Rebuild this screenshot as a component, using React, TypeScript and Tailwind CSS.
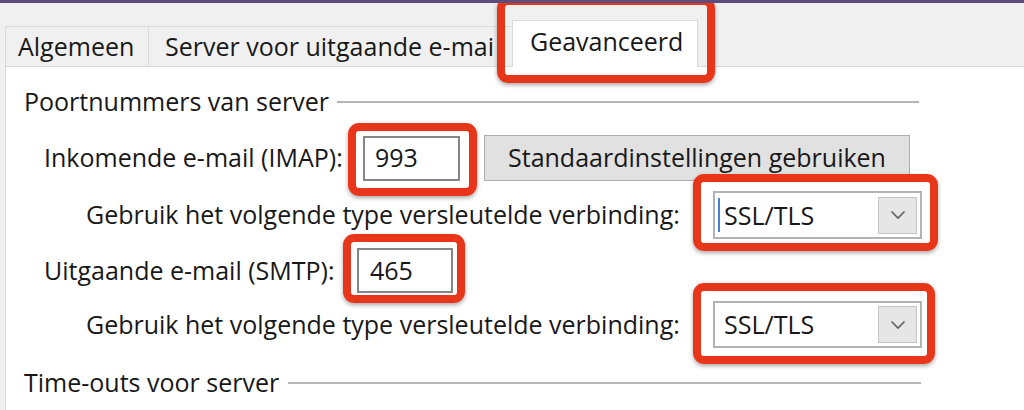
import React from "react";

const font = { fontFamily: '"Open Sans", "Noto Sans", Arial, sans-serif' };

function RedBox({ cls }: { cls: string }) {
  return (
    <div
      className={`pointer-events-none absolute rounded-[11px] border-[8px] border-[#e8361b] shadow-[0_2px_4px_rgba(0,0,0,0.35)] ${cls}`}
    />
  );
}

function Chevron() {
  return (
    <svg width="16" height="10" viewBox="0 0 16 10" fill="none">
      <path d="M1.5 1.5 L8 8 L14.5 1.5" stroke="#5f5f5f" strokeWidth="1.6" />
    </svg>
  );
}

function Select({ focused }: { focused?: boolean }) {
  return (
    <div className="flex h-full w-full items-center border-2 border-[#b3b3b3] bg-white pl-[3px] pr-[3px]">
      {focused ? <div className="h-[34px] w-[2px] bg-[#4a7fd8]" /> : <div className="w-[2px]" />}
      <span className="ml-[4px] flex-1 text-[25px] leading-none text-[#181818]">SSL/TLS</span>
      <div className="flex h-[37px] w-[39px] items-center justify-center border border-[#c4c4c4] bg-[#e6e6e6]">
        <Chevron />
      </div>
    </div>
  );
}

export default function App() {
  return (
    <div
      className="h-[410px] w-[1024px] overflow-hidden border-t-[3px] border-[#5c4e7c] bg-[#f0f0f0] text-[#181818]"
      style={font}
    >
      {/* tab strip */}
      <div className="flex h-[63px] items-end pl-[5px]">
        <div className="flex h-[40px] w-[143px] items-center border-l border-t border-[#d9d9d9] pl-[12px] text-[25px]">
          Algemeen
        </div>
        <div className="flex h-[40px] w-[364px] items-center overflow-hidden whitespace-nowrap border-l border-t border-[#d9d9d9] pl-[16px] text-[25px]">
          Server voor uitgaande e-mai
        </div>
        <div className="relative z-10 -mb-px flex h-[47px] w-[186px] items-center border-x border-t border-[#d9d9d9] bg-white pb-[5px] pl-[17px] text-[25px]">
          Geavanceerd
          <RedBox cls="-left-[16px] -right-[18px] -top-[24px] -bottom-[16px]" />
        </div>
      </div>

      {/* content panel */}
      <div className="ml-[5px] h-[400px] border-l border-t border-[#d9d9d9] bg-white pl-[18px]">
        {/* section header */}
        <div className="mt-[19px] flex h-[32px] w-[895px] items-center text-[25px]">
          <span>Poortnummers van server</span>
          <div className="ml-[8px] h-[2px] flex-1 bg-[#b5b5b5]" />
        </div>

        {/* IMAP row */}
        <div className="mt-[16px] flex h-[48px] items-center pl-[20px] text-[25px]">
          <span className="w-[319px] whitespace-nowrap">Inkomende e-mail (IMAP):</span>
          <div className="relative h-[45px] w-[97px]">
            <div className="flex h-full w-full items-center border-2 border-[#858585] bg-white pl-[10px]">993</div>
            <RedBox cls="-left-[15px] -right-[17px] -top-[13px] -bottom-[15px]" />
          </div>
          <button className="ml-[24px] h-[46px] w-[426px] whitespace-nowrap border border-[#adadad] bg-[#e1e1e1] text-[25px] text-[#181818]">
            Standaardinstellingen gebruiken
          </button>
        </div>

        {/* encryption row 1 */}
        <div className="mt-[9px] flex h-[48px] items-center pl-[62px] text-[25px]">
          <span className="w-[627px] whitespace-nowrap">Gebruik het volgende type versleutelde verbinding:</span>
          <div className="relative h-[48px] w-[209px]">
            <Select focused />
            <RedBox cls="-left-[20px] -right-[16px] -top-[17px] -bottom-[12px]" />
          </div>
        </div>

        {/* SMTP row */}
        <div className="mt-[9px] flex h-[45px] items-center pl-[20px] text-[25px]">
          <span className="w-[313px] whitespace-nowrap">Uitgaande e-mail (SMTP):</span>
          <div className="relative h-[45px] w-[96px]">
            <div className="flex h-full w-full items-center border-2 border-[#858585] bg-white pl-[11px]">465</div>
            <RedBox cls="-left-[14px] -right-[12px] -top-[14px] -bottom-[10px]" />
          </div>
        </div>

        {/* encryption row 2 */}
        <div className="mt-[8px] flex h-[47px] items-center pl-[62px] text-[25px]">
          <span className="w-[627px] whitespace-nowrap">Gebruik het volgende type versleutelde verbinding:</span>
          <div className="relative h-[47px] w-[209px]">
            <Select />
            <RedBox cls="-left-[20px] -right-[13px] -top-[18px] -bottom-[16px]" />
          </div>
        </div>

        {/* time-outs header */}
        <div className="mt-[19px] flex h-[32px] w-[897px] items-center text-[25px]">
          <span>Time-outs voor server</span>
          <div className="ml-[9px] h-[2px] flex-1 bg-[#b5b5b5]" />
        </div>
      </div>
    </div>
  );
}
